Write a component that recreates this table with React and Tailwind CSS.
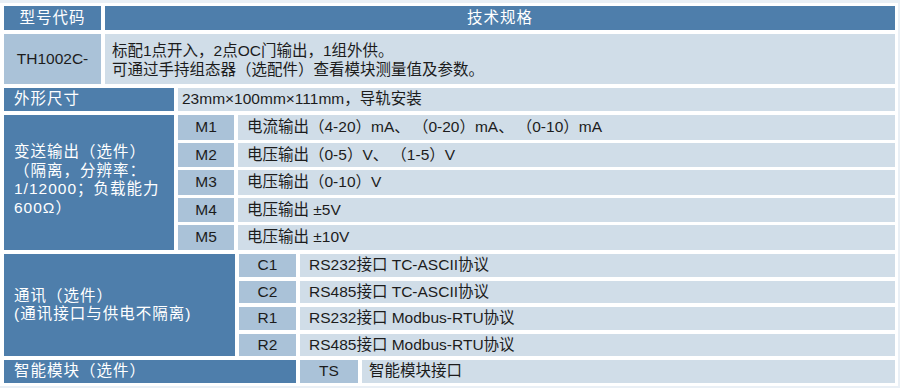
import React from 'react';

const dark = 'bg-[#4e7eab] text-white tracking-[1px]';
const mid = 'bg-[#aac2d8] text-[#1c1c1c]';
const light = 'bg-[#d0dde8] text-[#1c1c1c]';

// thin space after 、 keeps the gap before the next bracket close to the original
const outputs = [
  ['M1', '电流输出（4-20）mA、\u2009（0-20）mA、\u2009（0-10）mA'],
  ['M2', '电压输出（0-5）V、\u2009（1-5）V'],
  ['M3', '电压输出（0-10）V'],
  ['M4', '电压输出 ±5V'],
  ['M5', '电压输出 ±10V'],
];

const comms = [
  ['C1', 'RS232接口 TC-ASCII协议'],
  ['C2', 'RS485接口 TC-ASCII协议'],
  ['R1', 'RS232接口 Modbus-RTU协议'],
  ['R2', 'RS485接口 Modbus-RTU协议'],
];

const Row = ({ code, text, codeW }) => (
  <div className="flex flex-1 gap-1">
    <div className={`${mid} ${codeW} flex items-center justify-center`}>{code}</div>
    <div className={`${light} flex-1 flex items-center pl-[9px] whitespace-pre`}>{text}</div>
  </div>
);

const App = () => {
  return (
    <div className="w-[900px] h-[388px] bg-[#e9eff5] pt-[3px] font-['Liberation_Sans','Noto_Sans_CJK_SC',sans-serif] text-[15.5px] leading-[18.5px]">
      <div className="w-[898px] bg-white pt-[3px] pl-1 pr-[3px] pb-[3px] flex flex-col gap-1">
        {/* Header */}
        <div className="flex gap-1 h-[24px]">
          <div className={`${dark} w-[97px] flex items-center justify-center`}>型号代码</div>
          <div className={`${dark} flex-1 flex items-center justify-center`}>技术规格</div>
        </div>

        {/* Model */}
        <div className="flex gap-1 h-[50px]">
          <div className={`${mid} w-[97px] flex items-center justify-center`}>TH1002C-</div>
          <div className={`${light} flex-1 flex flex-col justify-center pl-[7px] pt-[3px]`}>
            <p>标配1点开入，2点OC门输出，1组外供。</p>
            <p>可通过手持组态器（选配件）查看模块测量值及参数。</p>
          </div>
        </div>

        {/* Size */}
        <div className="flex gap-1 h-[23px]">
          <div className={`${dark} w-[170px] flex items-center pl-[10px]`}>外形尺寸</div>
          <div className={`${light} flex-1 flex items-center pl-[4px]`}>23mm×100mm×111mm，导轨安装</div>
        </div>

        {/* Analog output */}
        <div className="flex gap-1 h-[135px]">
          <div className={`${dark} w-[170px] flex flex-col justify-center pl-[10px] pb-[5px]`}>
            <p>变送输出（选件）</p>
            <p>（隔离，分辨率：</p>
            <p>1/12000；负载能力</p>
            <p>600Ω）</p>
          </div>
          <div className="flex-1 flex flex-col gap-[3px]">
            {outputs.map(([c, t]) => (
              <Row key={c} code={c} text={t} codeW="w-[56px]" />
            ))}
          </div>
        </div>

        {/* Communication */}
        <div className="flex gap-1 h-[102px]">
          <div className={`${dark} w-[231px] flex flex-col justify-center pl-[10px] tracking-[0.5px]`}>
            <p>通讯（选件）</p>
            <p>(通讯接口与供电不隔离)</p>
          </div>
          <div className="flex-1 flex flex-col gap-1">
            {comms.map(([c, t]) => (
              <Row key={c} code={c} text={t} codeW="w-[57px]" />
            ))}
          </div>
        </div>

        {/* Smart module */}
        <div className="flex gap-1 h-[23px]">
          <div className={`${dark} w-[292px] flex items-center pl-[10px]`}>智能模块（选件）</div>
          <div className={`${mid} w-[58px] flex items-center justify-center`}>TS</div>
          <div className={`${light} flex-1 flex items-center pl-[7px]`}>智能模块接口</div>
        </div>
      </div>
    </div>
  );
};

export default App;
